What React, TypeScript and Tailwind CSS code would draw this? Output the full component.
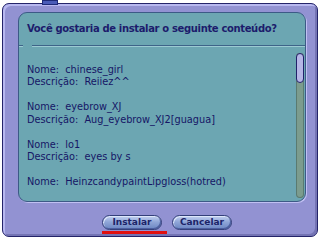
const items = [
  { nome: "chinese_girl", desc: "Reiiez^^" },
  { nome: "eyebrow_XJ", desc: "Aug_eyebrow_XJ2[guagua]" },
  { nome: "lo1", desc: "eyes by s" },
  { nome: "HeinzcandypaintLipgloss(hotred)", desc: null },
];

function PillButton({ label }: { label: string }) {
  return (
    <div className="flex h-[15px] w-[60px] items-center justify-center rounded-full border border-[#34407a] bg-[linear-gradient(to_bottom,#c4d2f2,#90a6d8_45%,#6c86c2)] shadow-[inset_1px_1px_0_#dce6fa,inset_-1px_-1px_0_#4c5ea0]">
      <span className="text-[9px] leading-none font-bold text-[#1c2468]">{label}</span>
    </div>
  );
}

export default function App() {
  return (
    <div className="relative h-[240px] w-[320px] overflow-hidden bg-white font-['DejaVu_Sans',sans-serif]">
      <div className="absolute left-[42px] top-0 z-10 h-[5px] w-[16px] border border-[#1e2a78] bg-[#4a5cb8]" />
      <div className="ml-[2px] mt-[3px] h-[234px] w-[316px] rounded-[7px] border border-[#24246a] bg-[#9292d2] px-[15px] pt-[8px] shadow-[inset_2px_2px_0_#b8b8f0,inset_-2px_-2px_0_#7474b4]">
        <div className="flex h-[190px] w-[288px] flex-col rounded-[9px] border border-[#3c5a86] bg-[#6ca6b2] shadow-[1px_1px_0_#c0c0f2]">
          <div className="flex h-[34px] items-center pl-[8px]">
            <span className="whitespace-nowrap text-[10px] font-bold tracking-[-0.35px] text-[#1c1c6c]">
              Você gostaria de instalar o seguinte conteúdo?
            </span>
          </div>
          <div className="flex h-[2px] w-full">
            <div className="h-[2px] w-[4px] border-t border-[#3e6488] bg-[#9ccad2]" />
            <div className="w-[9px]" />
            <div className="h-[2px] flex-1 border-t border-[#3e6488] bg-[#9ccad2]" />
          </div>
          <div className="flex flex-1 pr-[1px]">
            <div className="flex-1 pl-[8px] pt-[17px] text-[9.75px] leading-[12.5px] text-[#161666] whitespace-pre">
              {items.map((it, i) => (
                <div key={i} className="mb-[12.5px]">
                  <div>Nome:  {it.nome}</div>
                  {it.desc && <div>Descrição:  {it.desc}</div>}
                </div>
              ))}
            </div>
            <div className="mb-[3px] mt-[6px] flex w-[8px] flex-col rounded-full bg-[#7c9c8e] shadow-[inset_0_0_0_1px_#5a7a70]">
              <div className="h-[30px] w-[8px] rounded-full border border-[#22226a] bg-[#b6b6e6]" />
            </div>
          </div>
        </div>
        <div className="mt-[13px] flex gap-[10px] pl-[84px]">
          <div className="relative">
            <PillButton label="Instalar" />
            <div className="absolute left-0 top-[16px] h-[3px] w-[65px] bg-[#e01010]" />
          </div>
          <PillButton label="Cancelar" />
        </div>
      </div>
    </div>
  );
}
